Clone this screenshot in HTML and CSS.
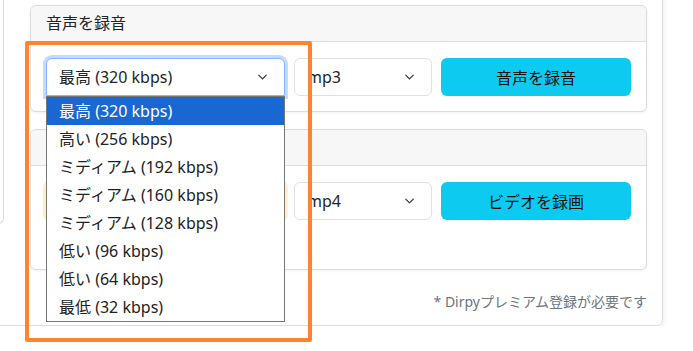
FILE: index.html
```html
<!DOCTYPE html>
<html lang="ja">

<head>
    <meta charset="UTF-8">
    <meta name="viewport" content="width=device-width, initial-scale=1.0">
    <title>Dirpy 録音</title>
    <link rel="stylesheet" href="styles.css">
</head>

<body>
    <div class="shell">
        <!-- Left column (clipped by the window) -->
        <div class="side"></div>

        <div class="main">
            <!-- Audio card -->
            <div class="card">
                <div class="card-header">音声を録音</div>
                <div class="card-body">
                    <div class="select-wrap">
                        <div class="select focused">最高 (320 kbps)</div>
                        <!-- Open dropdown list -->
                        <ul class="dropdown">
                            <li class="selected">最高 (320 kbps)</li>
                            <li>高い (256 kbps)</li>
                            <li>ミディアム (192 kbps)</li>
                            <li>ミディアム (160 kbps)</li>
                            <li>ミディアム (128 kbps)</li>
                            <li>低い (96 kbps)</li>
                            <li>低い (64 kbps)</li>
                            <li>最低 (32 kbps)</li>
                        </ul>
                    </div>
                    <div class="select">mp3</div>
                    <button class="btn">音声を録音</button>
                </div>
            </div>

            <!-- Video card (its title and quality select sit under the open list) -->
            <div class="card">
                <div class="card-header">&nbsp;</div>
                <div class="card-body video">
                    <div class="select warn"></div>
                    <div class="select">mp4</div>
                    <button class="btn">ビデオを録画</button>
                </div>
            </div>

            <p class="note">* Dirpyプレミアム登録が必要です</p>
        </div>
    </div>

    <!-- Annotation frame -->
    <div class="highlight"></div>
</body>

</html>
```

FILE: styles.css
```css
body {
    margin: 0;
    background-color: #fff;
    font-family: "Noto Sans", "Noto Sans CJK JP", sans-serif;
    color: #212529;
    overflow: hidden;
}

.shell {
    display: flex;
    width: 683px;
    margin: -20px 0 0 -20px;
    padding: 24px 16px 14px 9px;
    border: 1px solid #ddd;
    border-radius: 6px;
    box-shadow: 0 2px 6px rgba(0, 0, 0, 0.08);
    box-sizing: border-box;
}

/* Left column card, mostly outside the window */
.side {
    width: 13px;
    height: 227px;
    margin-top: -10px;
    border: 1px solid #ddd;
    border-left: none;
    border-radius: 0 0 6px 0;
    flex-shrink: 0;
}

.main {
    flex: 1;
    margin-left: 26px;
}

/* Cards */
.card {
    border: 1px solid #dcdcdc;
    border-radius: 6px;
    margin-bottom: 17px;
    background-color: #fff;
    box-shadow: 0 1px 3px rgba(0, 0, 0, 0.06);
}

.card-header {
    background-color: #f7f7f7;
    border-bottom: 1px solid #dcdcdc;
    border-radius: 6px 6px 0 0;
    padding: 8px 15px;
    font-size: 16px;
    line-height: 19px;
}

.card-body {
    display: grid;
    grid-template-columns: 239px 138px 190px;
    gap: 9px;
    padding: 16px 15px 15px;
}

.card-body.video {
    padding-bottom: 49px;
}

/* Fake selects */
.select-wrap {
    position: relative;
}

.select {
    height: 38px;
    padding: 0 36px 0 12px;
    border: 1px solid #dee2e6;
    border-radius: 6px;
    font-size: 16px;
    line-height: 36px;
    box-sizing: border-box;
    background: #fff url("data:image/svg+xml,%3csvg xmlns='http://www.w3.org/2000/svg' viewBox='0 0 16 16'%3e%3cpath fill='none' stroke='%23343a40' stroke-linecap='round' stroke-linejoin='round' stroke-width='2' d='m2 5 6 6 6-6'/%3e%3c/svg%3e") no-repeat right 15px center / 13px 10px;
}

.select.focused {
    border-color: #86b7fe;
    box-shadow: 0 0 0 3px rgba(13, 110, 253, 0.25);
    border-radius: 6px 6px 0 0;
}

.select.warn {
    border-color: #ffda6a;
    box-shadow: 0 0 0 3px rgba(255, 193, 7, 0.25);
}

/* Dropdown list opened under the first select */
.dropdown {
    position: absolute;
    top: 38px;
    left: 0;
    width: 239px;
    margin: 0;
    padding: 0;
    list-style: none;
    background-color: #fff;
    border: 1px solid #767676;
    box-sizing: border-box;
    z-index: 5;
}

.dropdown li {
    height: 28px;
    padding-left: 12px;
    font-size: 16px;
    line-height: 28px;
    color: #222;
}

.dropdown li.selected {
    background-color: #1967d2;
    color: #fff;
}

/* Buttons */
.btn {
    height: 38px;
    border: none;
    border-radius: 6px;
    background-color: #0dcaf0;
    color: #111;
    font-family: inherit;
    font-size: 16px;
}

.note {
    margin: 21px 0 0;
    text-align: right;
    font-size: 14px;
    color: #6c757d;
}

/* Orange annotation box drawn over the screenshot */
.highlight {
    position: absolute;
    left: 25px;
    top: 41px;
    width: 287px;
    height: 301px;
    border: 4px solid #fd8530;
    border-radius: 2px;
    box-sizing: border-box;
    z-index: 10;
}
```
